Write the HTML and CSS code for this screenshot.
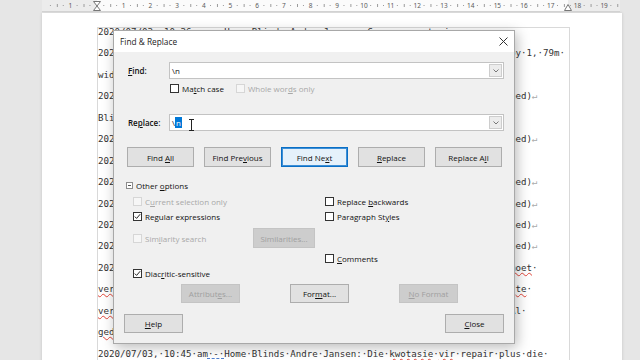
FILE: index.html
```html
<!DOCTYPE html>
<html lang="en">
<head>
    <meta charset="UTF-8">
    <meta name="viewport" content="width=device-width, initial-scale=1.0">
    <title>Find &amp; Replace</title>
    <link rel="stylesheet" href="styles.css">
</head>
<body>
    <div class="ruler">
        <span>1</span><span></span><span>1</span><span>2</span><span>3</span><span>4</span><span>5</span><span>6</span><span>7</span><span>8</span><span>9</span><span>10</span><span>11</span><span>12</span><span>13</span><span>14</span><span>15</span><span>16</span><span>17</span><span>18</span><span>19</span>
        <svg class="marker marker-left" width="8" height="10" viewBox="0 0 8 10"><path d="M0.5 0.5h7L4 5l3.5 4.5h-7L4 5z" fill="#fff" stroke="#777"/></svg>
        <svg class="marker marker-right" width="8" height="7" viewBox="0 0 8 7"><path d="M4 0.5l3.5 6h-7z" fill="#fff" stroke="#777"/></svg>
    </div>

    <div class="page">
        <div class="text-area">
            <!-- the dialog hides the middle of each line, only the visible ends are kept -->
            <div class="lines">
                <div class="line">2020/07/03,·10:36·am·-·Home·Blinds·Andre·Jansen:·Can·you·sent·pics<span class="br">↵</span></div>
                <div class="line"><span class="head">202</span>by·1,·79m·</div>
                <div class="line"><span class="head">wid</span></div>
                <div class="line"><span class="head">202</span>hed)<span class="br">↵</span></div>
                <div class="line"><span class="head">Bli</span></div>
                <div class="line"><span class="head">202</span>hed)<span class="br">↵</span></div>
                <div class="line"><span class="head">202</span></div>
                <div class="line"><span class="head">202</span>hed)<span class="br">↵</span></div>
                <div class="line"><span class="head">202</span>hed)<span class="br">↵</span></div>
                <div class="line"><span class="head">202</span>hed)<span class="br">↵</span></div>
                <div class="line"><span class="head">202</span>hed)<span class="br">↵</span></div>
                <div class="line"><span class="head">202</span><span class="sp">moet</span>·</div>
                <div class="line"><span class="head"><span class="sp">ver</span></span>·<span class="sp">te</span>·</div>
                <div class="line"><span class="head"><span class="sp">ver</span></span>Al·</div>
                <div class="line"><span class="head"><span class="sp">ged</span></span></div>
                <div class="line">2020/07/03,·10:45·am<span class="gr">·-·</span>Home·Blinds·Andre·Jansen:·Die·<span class="sp">kwotasie</span>·<span class="sp">vir</span>·repair·plus·die·</div>
            </div>
        </div>
    </div>

    <div class="dialog">
        <div class="titlebar">
            <span>Find &amp; Replace</span>
            <svg width="9" height="9" viewBox="0 0 9 9"><path d="M0.5 0.5l8 8M8.5 0.5l-8 8" stroke="#333" stroke-width="1"/></svg>
        </div>
        <div class="dlg-body">
            <div class="field-row">
                <span class="field-label"><u>F</u>ind:</span>
                <div class="combo">
                    <span class="combo-text">\n</span>
                    <span class="combo-btn"><svg width="6" height="4" viewBox="0 0 6 4"><path d="M0.5 0.5L3 3l2.5-2.5" fill="none" stroke="#777"/></svg></span>
                </div>
            </div>
            <div class="check-row">
                <span class="check"><span class="box"></span><span>Ma<u>t</u>ch case</span></span>
                <span class="check off"><span class="box"></span><span>Whole wor<u>d</u>s only</span></span>
            </div>
            <div class="field-row replace-row">
                <span class="field-label">Re<u>p</u>lace:</span>
                <div class="combo">
                    <span class="combo-text"><span>\<span class="sel">n</span></span><svg class="ibeam" width="5" height="12" viewBox="0 0 5 12"><path d="M0 0.5h5M2.5 0.5v11M0 11.5h5" stroke="#222" fill="none"/></svg></span>
                    <span class="combo-btn"><svg width="6" height="4" viewBox="0 0 6 4"><path d="M0.5 0.5L3 3l2.5-2.5" fill="none" stroke="#777"/></svg></span>
                </div>
            </div>
            <div class="btn-row main-btns">
                <span class="btn"><span>Find <u>A</u>ll</span></span>
                <span class="btn"><span>Find Pre<u>v</u>ious</span></span>
                <span class="btn default"><span>Find Ne<u>x</u>t</span></span>
                <span class="btn"><span><u>R</u>eplace</span></span>
                <span class="btn"><span>Replace A<u>l</u>l</span></span>
            </div>
            <div class="expander">
                <span class="minus-box"></span>
                <span>Other <u>o</u>ptions</span>
            </div>
            <div class="options">
                <span class="check off wide"><span class="box"></span><span>C<u>u</u>rrent selection only</span></span>
                <span class="check"><span class="box"></span><span>Replace <u>b</u>ackwards</span></span>

                <span class="check wide"><span class="box"><svg width="7" height="7" viewBox="0 0 7 7"><path d="M0.8 3.6l1.8 1.8L6.2 1.2" fill="none" stroke="#222"/></svg></span><span>Re<u>g</u>ular expressions</span></span>
                <span class="check"><span class="box"></span><span>Paragraph St<u>y</u>les</span></span>

                <span class="check off"><span class="box"></span><span>Sim<u>i</u>larity search</span></span>
                <span class="btn off"><span>Similarities...</span></span>
                <span></span>

                <span class="wide"></span>
                <span class="check"><span class="box"></span><span><u>C</u>omments</span></span>

                <span class="check wide"><span class="box"><svg width="7" height="7" viewBox="0 0 7 7"><path d="M0.8 3.6l1.8 1.8L6.2 1.2" fill="none" stroke="#222"/></svg></span><span>Diac<u>r</u>itic-sensitive</span></span>
                <span></span>
            </div>
            <div class="btn-row attr-row">
                <span class="btn off"><span>Attribut<u>e</u>s...</span></span>
                <span class="btn"><span>For<u>m</u>at...</span></span>
                <span class="btn off"><span><u>N</u>o Format</span></span>
            </div>
            <div class="btn-row footer">
                <span class="btn"><span><u>H</u>elp</span></span>
                <span class="btn"><span><u>C</u>lose</span></span>
            </div>
        </div>
    </div>
</body>
</html>
```

FILE: styles.css
```css
body {
    margin: 0;
    width: 640px;
    height: 360px;
    overflow: hidden;
    position: relative;
    background: #e6e6e6;
    font-family: "Open Sans", "Noto Sans", sans-serif;
}

/* ruler */
.ruler {
    position: relative;
    display: flex;
    margin-left: 42px;
    width: 578px;
    height: 12px;
    padding-left: 15px;
    box-sizing: border-box;
    border-bottom: 1px solid #d2d2d2;
    font: 6.5px "Noto Sans", sans-serif;
    color: #5a5a5a;
    background:
        linear-gradient(to right, transparent 14.5px, #9a9a9a 14.5px, #9a9a9a 15.5px, transparent 15.5px) 0 4px / 26.7px 3px repeat-x,
        linear-gradient(to right, transparent 8px, #9a9a9a 8px, #9a9a9a 9px, transparent 9px) 0 5px / 26.7px 1px repeat-x,
        linear-gradient(to right, transparent 21px, #9a9a9a 21px, #9a9a9a 22px, transparent 22px) 0 5px / 26.7px 1px repeat-x,
        linear-gradient(to right, #ececec 55px, #fbfbfb 55px, #fbfbfb 526px, #ececec 526px);
}
.ruler span {
    flex: none;
    width: 26.7px;
    text-align: center;
    line-height: 11px;
}
.marker {
    position: absolute;
    display: block;
}
.marker-left {
    left: 51px;
    top: 1px;
}
.marker-right {
    left: 522px;
    top: 4px;
}

/* document page */
.page {
    margin: 1px 0 0 42px;
    width: 580px;
    height: 360px;
    padding-top: 14px;
    box-sizing: border-box;
    background: #fff;
    box-shadow: 0 0 3px rgba(0, 0, 0, .15);
}
.text-area {
    margin-left: 55px;
    width: 471px;
    height: 340px;
    border: 1px solid #d9d9d9;
    border-bottom: 0;
}
.lines {
    margin-top: -6px;
    font: 9.15px "DejaVu Sans Mono", monospace;
    color: #333;
}
.line {
    height: 21.45px;
    line-height: 21.45px;
    white-space: pre;
}
.head {
    display: inline-block;
    width: 75ch;
}
.br {
    color: #aaa;
}
.sp {
    text-decoration: underline wavy #e0453a;
    text-decoration-thickness: 1px;
}
.gr {
    text-decoration: underline dashed #4f7fd0;
    text-decoration-thickness: 1px;
}

/* dialog */
.dialog {
    position: absolute;
    left: 113px;
    top: 30px;
    width: 402px;
    box-sizing: border-box;
    border: 1px solid #a8a8a8;
    background: #f0f0f0;
    box-shadow: 2px 3px 12px rgba(0, 0, 0, .28);
    font-size: 8px;
    color: #111;
}
.titlebar {
    height: 21px;
    display: flex;
    align-items: center;
    justify-content: space-between;
    padding: 0 6px;
    background: #fff;
    font-size: 8.3px;
    color: #222;
}
.dlg-body {
    padding: 0 10px 10px 14px;
}
u {
    text-underline-offset: 1px;
}
.field-row {
    display: flex;
    align-items: center;
    margin-top: 10px;
    height: 17px;
}
.replace-row {
    margin-top: 19px;
}
.field-label {
    width: 41px;
    flex: none;
    font-weight: 600;
}
.combo {
    flex: 1;
    height: 17px;
    box-sizing: border-box;
    display: flex;
    align-items: center;
    padding-left: 2px;
    border: 1px solid #c3c3c3;
    background: #fff;
}
.combo-text {
    flex: 1;
    display: flex;
    align-items: center;
}
.sel {
    background: #0078d7;
    color: #fff;
    padding: 0 1px;
}
.ibeam {
    margin-left: 7px;
    margin-top: 5px;
}
.combo-btn {
    align-self: stretch;
    width: 11px;
    margin: 1px;
    display: flex;
    align-items: center;
    justify-content: center;
    border: 1px solid #cdcdcd;
    background: #ececec;
}
.check-row {
    display: flex;
    gap: 12px;
    margin-top: 3px;
    height: 13px;
    padding-left: 42px;
}
.check {
    display: flex;
    align-items: center;
    gap: 3px;
}
.box {
    width: 9px;
    height: 9px;
    flex: none;
    box-sizing: border-box;
    display: flex;
    align-items: center;
    justify-content: center;
    border: 1px solid #333;
    background: #fff;
}
.check.off {
    color: #a8a8a8;
}
.check.off .box {
    border-color: #d6d6d6;
    background: #f6f6f6;
}
.btn-row {
    display: flex;
}
.btn {
    height: 20px;
    box-sizing: border-box;
    display: flex;
    align-items: center;
    justify-content: center;
    border: 1px solid #adadad;
    background: #e1e1e1;
}
.btn.off {
    border-color: #c4c4c4;
    background: #cdcdcd;
    color: #a0a0a0;
}
.btn.default {
    border-color: #0a6fc6;
    background: #e5f1fb;
    box-shadow: inset 0 0 0 1px #3d8fd6;
}
.main-btns {
    margin: 16px 0 0 -1px;
    gap: 10px;
}
.main-btns .btn {
    width: 67px;
}
.expander {
    display: flex;
    align-items: center;
    gap: 3px;
    margin: 11px 0 0 -2px;
    height: 14px;
}
.minus-box {
    width: 7px;
    height: 7px;
    box-sizing: border-box;
    border: 1px solid #8c8c8c;
    background: linear-gradient(#555, #555) center / 3px 1px no-repeat, #fff;
}
.options {
    display: grid;
    grid-template-columns: 120px 72px 1fr;
    grid-template-rows: 14px 16px 28px 12px 18px;
    margin-top: 2px;
    padding-left: 5px;
}
.options .wide {
    grid-column: span 2;
}
.options .btn {
    align-self: center;
    width: 62px;
}
.attr-row {
    margin: 2px 0 0 53px;
    gap: 50px;
}
.attr-row .btn {
    width: 59px;
    height: 19px;
}
.footer {
    margin: 11px 0 0 -4px;
    justify-content: space-between;
}
.footer .btn {
    width: 59px;
    height: 19px;
}
```
